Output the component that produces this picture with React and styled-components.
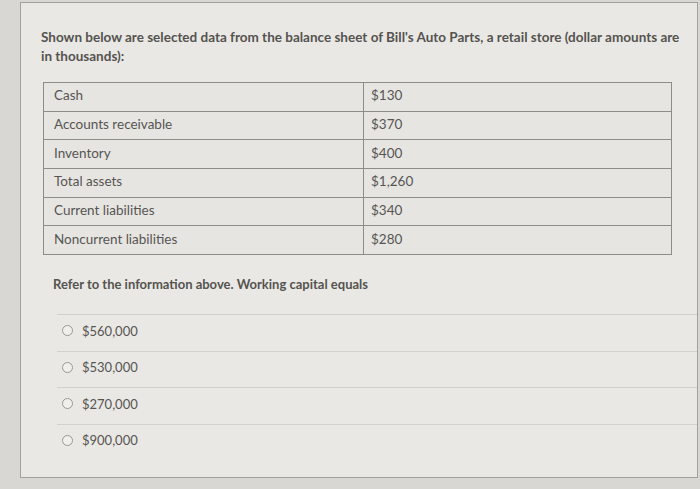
import React from "react";
import styled, { createGlobalStyle } from "styled-components";

const rows = [
  ["Cash", "$130"],
  ["Accounts receivable", "$370"],
  ["Inventory", "$400"],
  ["Total assets", "$1,260"],
  ["Current liabilities", "$340"],
  ["Noncurrent liabilities", "$280"],
];

const options = ["$560,000", "$530,000", "$270,000", "$900,000"];

function App() {
  return (
    <Page>
      <GlobalStyle />
      <Card>
        <Intro>
          Shown below are selected data from the balance sheet of Bill's Auto
          Parts, a retail store (dollar amounts are in thousands):
        </Intro>

        <Table>
          <tbody>
            {rows.map(([label, value]) => (
              <tr key={label}>
                <LabelCell>{label}</LabelCell>
                <ValueCell>{value}</ValueCell>
              </tr>
            ))}
          </tbody>
        </Table>

        <Question>Refer to the information above. Working capital equals</Question>

        <OptionList>
          {options.map((opt) => (
            <Option key={opt}>
              <Radio />
              <OptionText>{opt}</OptionText>
            </Option>
          ))}
        </OptionList>
      </Card>
    </Page>
  );
}

const GlobalStyle = createGlobalStyle`
  html, body {
    margin: 0;
    padding: 0;
    background: #d9d7d3;
    overflow: hidden;
  }
`;

const Page = styled.div`
  width: 700px;
  height: 489px;
  padding: 2px 0 0 20px;
  box-sizing: border-box;
  font-family: Lato, "Open Sans", sans-serif;
  color: #555350;
`;

const Card = styled.div`
  width: 678px;
  height: 476px;
  box-sizing: border-box;
  background: #e9e8e5;
  border: 1px solid #a3a19e;
  padding: 25px 0 0 20px;
`;

const Intro = styled.p`
  margin: 0;
  width: 640px;
  font-size: 13.5px;
  line-height: 19px;
  font-weight: 700;
  color: #55534f;
`;

const Table = styled.table`
  margin: 16px 0 0 2px;
  width: 629px;
  border-collapse: collapse;
  background: #e6e5e2;
  font-size: 13.5px;
`;

const Cell = styled.td`
  height: 24.7px;
  padding: 0 0 3px 10px;
  border: 1.5px solid #8e8c89;
  vertical-align: middle;
  color: #575552;
`;

const LabelCell = styled(Cell)`
  width: 309px;
`;

const ValueCell = styled(Cell)`
  padding-left: 7px;
`;

const Question = styled.p`
  margin: 21px 0 0 12px;
  font-size: 13px;
  font-weight: 700;
  color: #55534f;
`;

const OptionList = styled.div`
  margin: 22px 0 0 16px;
  display: flex;
  flex-direction: column;
`;

const Option = styled.div`
  display: flex;
  align-items: center;
  height: 36.5px;
  box-sizing: border-box;
  border-top: 1px solid #d2d0cc;
  padding: 0 0 4px 5px;
  gap: 9px;
`;

const Radio = styled.span`
  width: 9px;
  height: 9px;
  border-radius: 50%;
  border: 1.5px solid #9a9894;
  background: #f0efec;
`;

const OptionText = styled.span`
  font-size: 13px;
  color: #575552;
`;

export default App;
